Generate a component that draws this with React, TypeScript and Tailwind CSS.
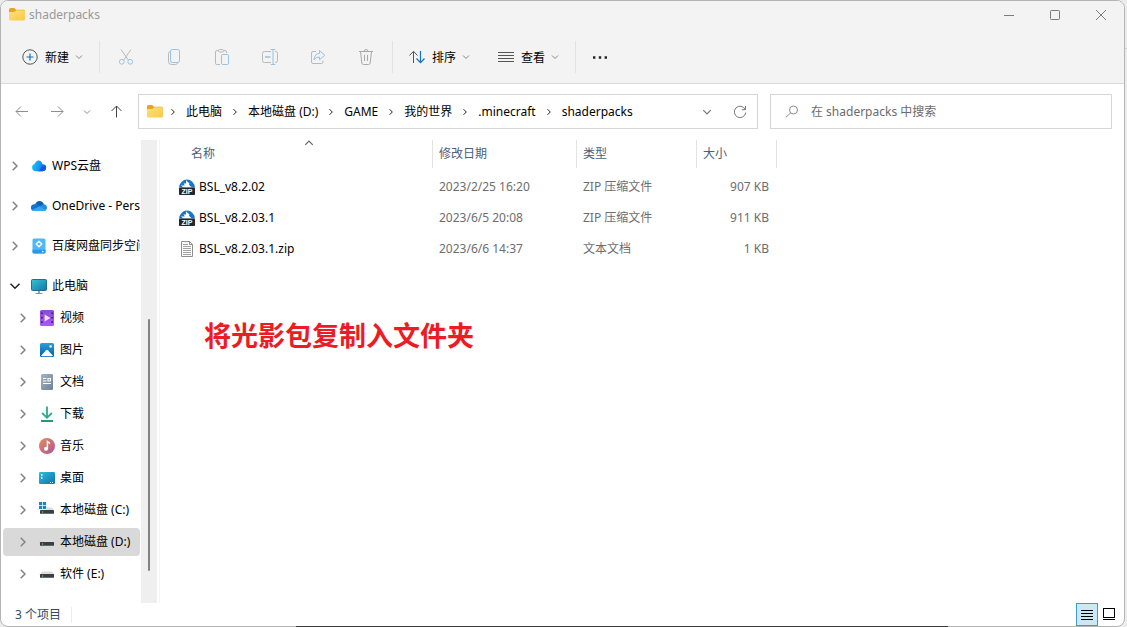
import type { ReactNode } from "react";

const CRUMBS = ["此电脑", "本地磁盘 (D:)", "GAME", "我的世界", ".minecraft", "shaderpacks"];

const CLOUD = [
  { label: "WPS云盘", icon: <WpsIcon /> },
  { label: "OneDrive - Personal", icon: <OneDriveIcon /> },
  { label: "百度网盘同步空间", icon: <BaiduIcon /> },
];

const PLACES = [
  { label: "视频", icon: <VideoIcon /> },
  { label: "图片", icon: <PictureIcon /> },
  { label: "文档", icon: <DocumentIcon /> },
  { label: "下载", icon: <DownloadIcon /> },
  { label: "音乐", icon: <MusicIcon /> },
  { label: "桌面", icon: <DesktopIcon /> },
  { label: "本地磁盘 (C:)", icon: <DriveIcon system /> },
  { label: "本地磁盘 (D:)", icon: <DriveIcon />, selected: true },
  { label: "软件 (E:)", icon: <DriveIcon /> },
];

const FILES = [
  { name: "BSL_v8.2.02", date: "2023/2/25 16:20", type: "ZIP 压缩文件", size: "907 KB", zip: true },
  { name: "BSL_v8.2.03.1", date: "2023/6/5 20:08", type: "ZIP 压缩文件", size: "911 KB", zip: true },
  { name: "BSL_v8.2.03.1.zip", date: "2023/6/6 14:37", type: "文本文档", size: "1 KB", zip: false },
];

function Svg({ children, className = "" }: { children: ReactNode; className?: string }) {
  return (
    <svg viewBox="0 0 16 16" fill="none" aria-hidden="true" className={`h-4 w-4 shrink-0 ${className}`}>
      {children}
    </svg>
  );
}

function Chevron({ dir, className = "" }: { dir: "right" | "down" | "up"; className?: string }) {
  const d = { right: "M2.5 1.2 5.3 4 2.5 6.8", down: "M1 2.5 4 5.5 7 2.5", up: "M1 5.5 4 2.5 7 5.5" }[dir];
  return (
    <svg viewBox="0 0 8 8" fill="none" stroke="currentColor" aria-hidden="true" className={`shrink-0 ${className}`}>
      <path d={d} />
    </svg>
  );
}

function FolderIcon() {
  return (
    <Svg>
      <defs>
        <linearGradient id="folder" x1="0" y1="0" x2="1" y2="1">
          <stop stopColor="#ffe083" />
          <stop offset="1" stopColor="#fbc843" />
        </linearGradient>
      </defs>
      <path d="M0 2.5Q0 1 1.5 1H5.2L7 2.7H14.5Q16 2.7 16 4.2V8H0Z" fill="#e5a520" />
      <path d="M0 5.7Q0 4.9 1 4.9H5.4L7.2 3.3H14.7Q16 3.3 16 4.5V12Q16 13.5 14.5 13.5H1.5Q0 13.5 0 12Z" fill="url(#folder)" />
    </Svg>
  );
}

function WpsIcon() {
  return (
    <Svg>
      <defs>
        <linearGradient id="wps" x1="0" y1="0.4" x2="1" y2="0.6">
          <stop stopColor="#16c7f3" />
          <stop offset="0.5" stopColor="#1497f5" />
          <stop offset="1" stopColor="#1d54e8" />
        </linearGradient>
      </defs>
      <path d="M4.5 13.2A3.7 3.7 0 0 1 3.6 6C4.5 3.7 6 2.4 7.6 2.4C10 2.4 10.9 4.4 11.4 6C14 6.3 15.2 7.8 15.2 9.6C15.2 11.8 13.6 13.2 11.6 13.2Z" fill="url(#wps)" />
      <path d="M6.5 13.2C9.6 12.8 9.5 7 14.3 7.2C16 10 14.8 13.2 11.6 13.2Z" fill="#1257e6" />
    </Svg>
  );
}

function OneDriveIcon() {
  return (
    <Svg>
      <path d="M4 7C4.6 4.4 6.4 3 8.5 3C10.6 3 12.3 4.3 12.9 6.3L10 10Z" fill="#0f5fb5" />
      <path d="M3.4 13A3.4 3.4 0 0 1 3.3 6.2C4.9 5.8 6.2 6.1 7.4 6.9L11 9.1L8 13Z" fill="#1473cd" />
      <path d="M7.5 9L10.6 7.2C13.5 5 16 7.4 16 9.8C16 11.7 14.6 13 12.8 13H6Z" fill="#1f8fe0" />
      <path d="M1.2 11.8L8.6 8.4L15.2 12Q14.3 13 12.8 13H3.4Q2 13 1.2 11.8Z" fill="#30a8ee" />
    </Svg>
  );
}

function BaiduIcon() {
  return (
    <Svg>
      <rect x="1.5" y="0.5" width="13" height="15" rx="1.6" fill="#4bb8f7" />
      <path d="M1.5 11.8H14.5V14Q14.5 15.5 13 15.5H3Q1.5 15.5 1.5 14Z" fill="#2b98e6" />
      <path d="M8 3.2 10.8 6 8 8.8 5.2 6Z" stroke="#fff" strokeWidth="1.5" strokeLinejoin="round" />
      <circle cx="11.8" cy="13.6" r="0.8" fill="#fff" />
    </Svg>
  );
}

function MonitorIcon() {
  return (
    <Svg>
      <defs>
        <linearGradient id="screen" x1="0" y1="0" x2="1" y2="1">
          <stop stopColor="#35c5cf" />
          <stop offset="1" stopColor="#1173b5" />
        </linearGradient>
      </defs>
      <rect x="0.5" y="1.5" width="15" height="11" rx="1" fill="url(#screen)" stroke="#1f6f91" />
      <path d="M7 13H9V15H7Z" fill="#8fa9b6" />
      <path d="M4.5 15.5H11.5" stroke="#7f98a5" />
    </Svg>
  );
}

function VideoIcon() {
  return (
    <Svg>
      <defs>
        <linearGradient id="video" x1="0" y1="0" x2="0" y2="1">
          <stop stopColor="#8a4bd6" />
          <stop offset="1" stopColor="#a65bf0" />
        </linearGradient>
      </defs>
      <rect x="1" y="0" width="14" height="16" rx="1.5" fill="url(#video)" />
      <path d="M2.9 2.5V15M13.1 2.5V15" stroke="#3f1a78" strokeWidth="1.6" strokeDasharray="1.6 2.8" />
      <path d="M5.6 4.4 11.4 8 5.6 11.6Z" fill="#f1e4ff" />
    </Svg>
  );
}

function PictureIcon() {
  return (
    <Svg>
      <defs>
        <linearGradient id="picture" x1="0" y1="0" x2="0" y2="1">
          <stop stopColor="#279fe0" />
          <stop offset="1" stopColor="#0b5ca6" />
        </linearGradient>
      </defs>
      <rect x="1" y="1" width="14" height="14" rx="1.5" fill="url(#picture)" />
      <path d="M2 13.8 7.2 8.2Q8 7.4 8.8 8.2L14 13.8Q13.6 14.2 12.6 14.2H3.4Q2.4 14.2 2 13.8Z" fill="#fff" />
      <circle cx="11.6" cy="4.4" r="1.2" fill="#fff" />
    </Svg>
  );
}

function DocumentIcon() {
  return (
    <Svg>
      <defs>
        <linearGradient id="document" x1="0" y1="0" x2="1" y2="1">
          <stop stopColor="#a5b5c4" />
          <stop offset="1" stopColor="#6d8196" />
        </linearGradient>
      </defs>
      <rect x="2" y="0" width="12" height="16" rx="1.2" fill="url(#document)" />
      <path d="M4 4.5H7.5M4 7H7.5M4 9.5H12M9 4.5H11.5V7H9Z" stroke="#fff" strokeWidth="1.1" />
    </Svg>
  );
}

function DownloadIcon() {
  return (
    <Svg>
      <path d="M8 0.5V11.5M3.2 7 8 11.8 12.8 7" stroke="#2ba98c" strokeWidth="1.8" />
      <path d="M2 15H14" stroke="#1e9b7c" strokeWidth="1.8" />
    </Svg>
  );
}

function MusicIcon() {
  return (
    <Svg>
      <defs>
        <linearGradient id="music" x1="0" y1="0" x2="1" y2="1">
          <stop stopColor="#e98a5c" />
          <stop offset="1" stopColor="#a9579a" />
        </linearGradient>
      </defs>
      <circle cx="8" cy="8" r="8" fill="url(#music)" />
      <circle cx="7" cy="10.8" r="2" fill="#fff" />
      <path d="M8.4 10.8V3.4L11 5.6" stroke="#fff" strokeWidth="1.4" />
    </Svg>
  );
}

function DesktopIcon() {
  return (
    <Svg>
      <defs>
        <linearGradient id="desktop" x1="0" y1="0" x2="1" y2="1">
          <stop stopColor="#2fc0d8" />
          <stop offset="1" stopColor="#0f6fb3" />
        </linearGradient>
      </defs>
      <rect x="0" y="2" width="16" height="12" rx="1.2" fill="url(#desktop)" />
      <path d="M2 5H3.5M2 8H3.5" stroke="#fff" strokeWidth="1.3" />
      <path d="M11 12.5H15" stroke="#d5f1fa" strokeDasharray="1 1" />
    </Svg>
  );
}

function DriveIcon({ system = false }: { system?: boolean }) {
  return (
    <Svg>
      <path d="M3.2 5.5H12.8L15 8.2H1Z" fill="#dcdcdc" />
      <rect x="1" y="8" width="14" height="3.8" rx="0.4" fill="#3a3f43" />
      <path d="M3 10H4.2" stroke="#7fe0a0" />
      {system && (
        <>
          <rect x="0" y="0" width="7.6" height="7.6" fill="#fff" />
          <path d="M0 0H3.2V3.2H0ZM3.9 0H7.1V3.2H3.9ZM0 3.9H3.2V7.1H0ZM3.9 3.9H7.1V7.1H3.9Z" fill="#1887bd" />
        </>
      )}
    </Svg>
  );
}

function ZipIcon() {
  return (
    <Svg>
      <path d="M0.2 8.4A7.8 7.8 0 0 1 15.8 8.4Z" fill="#1878c4" />
      <path d="M7 1.2 10.6 4.8 9.8 5.8 13 8.4H4.4L2 6.4H5.8L4.6 4.6H7Z" fill="#fff" />
      <rect x="0" y="8.6" width="16" height="7.4" rx="0.8" fill="#23272b" />
      <text x="8" y="14.7" textAnchor="middle" fill="#fff" fontFamily="Liberation Sans, sans-serif" fontSize="7" fontWeight="700">
        ZIP
      </text>
    </Svg>
  );
}

function TextFileIcon() {
  return (
    <Svg>
      <path d="M2.5 0.5H10.5L13.5 3.5V15.5H2.5Z" fill="#fafafa" stroke="#8e8e8e" />
      <path d="M10.5 0.5V3.5H13.5" stroke="#8e8e8e" />
      <path d="M4 3.5H9M4 5.5H12M4 7.5H12M4 9.5H12M4 11.5H12M4 13.5H12" stroke="#a2a2a2" />
    </Svg>
  );
}

const GRAY = "#b9b9b9";
const BLUE = "#94c3e6";

const EDIT_ACTIONS = [
  {
    label: "剪切",
    icon: (
      <Svg>
        <path d="M3 0.5 10.3 11M13 0.5 5.7 11" stroke={GRAY} />
        <circle cx="3.8" cy="12.8" r="2.4" stroke={BLUE} />
        <circle cx="12.2" cy="12.8" r="2.4" stroke={BLUE} />
      </Svg>
    ),
  },
  {
    label: "复制",
    icon: (
      <Svg>
        <path d="M4 2.5Q2.5 3 2.5 4.5V12.5Q2.5 15.5 5.5 15.5H9.5Q11 15.5 11.6 14" stroke={GRAY} />
        <rect x="4.5" y="0.5" width="9" height="13" rx="1.8" stroke={BLUE} />
      </Svg>
    ),
  },
  {
    label: "粘贴",
    icon: (
      <Svg>
        <path d="M6 15.5H2.8Q1.5 15.5 1.5 14.2V3Q1.5 1.5 3 1.5H4.5M9.5 1.5H11Q12.5 1.5 12.5 3V4" stroke={GRAY} />
        <rect x="4.5" y="0.5" width="5" height="2.5" rx="1.2" stroke={GRAY} />
        <rect x="7.5" y="5.5" width="7" height="10" rx="1.2" stroke={BLUE} />
      </Svg>
    ),
  },
  {
    label: "重命名",
    icon: (
      <Svg>
        <path d="M9 2.5H2.5Q0.5 2.5 0.5 4.5V11.5Q0.5 13.5 2.5 13.5H9M13 2.5H13.8Q15.5 2.5 15.5 4.5V11.5Q15.5 13.5 13.8 13.5H13" stroke={GRAY} />
        <path d="M3 8H8.5" stroke={BLUE} strokeWidth="1.4" />
        <path d="M8.7 0.5H13.3M8.7 15.5H13.3M11 0.5V15.5" stroke={BLUE} />
      </Svg>
    ),
  },
  {
    label: "共享",
    icon: (
      <Svg>
        <path d="M6 2.5H3Q1.5 2.5 1.5 4V13Q1.5 14.5 3 14.5H11.5Q13 14.5 13 13V11.5" stroke={GRAY} />
        <path d="M9.5 1.5 14.8 6.2 9.5 10.8V8Q6 7.8 4 10.8Q4.5 4.8 9.5 4.3Z" stroke={BLUE} strokeLinejoin="round" />
      </Svg>
    ),
  },
  {
    label: "删除",
    icon: (
      <Svg>
        <path d="M1 2.5H15M6 2.5Q6 0.5 8 0.5T10 2.5M2.5 2.5 3.8 14Q4 15.5 5.4 15.5H10.6Q12 15.5 12.2 14L13.5 2.5M6.5 5.8V12M9.5 5.8V12" stroke="#a9a9a9" />
      </Svg>
    ),
  },
];

function Divider() {
  return <div className="h-8 w-px shrink-0 bg-[#e2e2e2]" />;
}

function ToolButton({ label, icon }: { label: string; icon: ReactNode }) {
  return (
    <button type="button" className="flex shrink-0 items-center text-black">
      {icon}
      <span className="ml-[7px] pt-px">{label}</span>
      <Chevron dir="down" className="ml-1.5 h-2 w-2 text-[#888]" />
    </button>
  );
}

function TreeRow({ label, icon, child = false, open = false, selected = false }: {
  label: string;
  icon: ReactNode;
  child?: boolean;
  open?: boolean;
  selected?: boolean;
}) {
  return (
    <a
      href="#"
      className={`flex h-7 items-center overflow-hidden whitespace-nowrap rounded-sm ${child ? "pl-3.5" : "pl-1.5"} ${selected ? "bg-[#d9d9d9]" : ""}`}
    >
      <Chevron dir={open ? "down" : "right"} className={`mr-2.5 h-3 w-3 ${open ? "text-[#222]" : "text-[#858585]"}`} />
      {icon}
      <span className="ml-[5px]">{label}</span>
    </a>
  );
}

function TitleBar() {
  return (
    <header className="flex h-7 items-center pl-2">
      <FolderIcon />
      <h1 className="ml-1 text-[#999]">shaderpacks</h1>
      <div className="ml-auto flex gap-[30px] pr-[15px] text-[#7c7c7c]">
        <button type="button" aria-label="最小化">
          <Svg><path d="M3 8.5H13" stroke="currentColor" /></Svg>
        </button>
        <button type="button" aria-label="最大化">
          <Svg><rect x="3.5" y="3.5" width="9" height="9" rx="0.8" stroke="currentColor" /></Svg>
        </button>
        <button type="button" aria-label="关闭">
          <Svg><path d="M3 3 13 13M13 3 3 13" stroke="currentColor" /></Svg>
        </button>
      </div>
    </header>
  );
}

function Toolbar() {
  return (
    <div className="flex h-[55px] items-center border-b border-[#dadada] pl-[21px] pt-0.5">
      <ToolButton
        label="新建"
        icon={
          <Svg>
            <circle cx="8" cy="8" r="7.2" stroke="#555" />
            <path d="M4.5 8H11.5M8 4.5V11.5" stroke="#1572b8" strokeWidth="1.2" />
          </Svg>
        }
      />
      <div className="ml-4 mr-0.5"><Divider /></div>
      {EDIT_ACTIONS.map((a) => (
        <button key={a.label} type="button" aria-label={a.label} className="flex h-10 w-12 shrink-0 items-center justify-center">
          {a.icon}
        </button>
      ))}
      <div className="ml-0.5 mr-4"><Divider /></div>
      <ToolButton
        label="排序"
        icon={
          <Svg>
            <path d="M4.5 14V2.5M0.5 6.5 4.5 2.3 8.5 6.5" stroke="#555" />
            <path d="M11.5 2V13.5M7.5 9.5 11.5 13.7 15.5 9.5" stroke="#1572b8" strokeWidth="1.2" />
          </Svg>
        }
      />
      <div className="w-7" />
      <ToolButton
        label="查看"
        icon={<Svg><path d="M0 3.5H16M0 6.5H16M0 9.5H16M0 12.5H16" stroke="#555" /></Svg>}
      />
      <div className="mx-4"><Divider /></div>
      <button type="button" aria-label="查看更多">
        <Svg>
          <path d="M1 8.5H3.4M6.8 8.5H9.2M12.6 8.5H15" stroke="#222" strokeWidth="2.4" />
        </Svg>
      </button>
    </div>
  );
}

function AddressRow() {
  return (
    <div className="flex items-center pb-[11px] pl-[13px] pr-3 pt-2.5">
      <button type="button" aria-label="后退" className="text-[#8d8d8d]">
        <Svg><path d="M14 7.5H2M7 2.5 2 7.5 7 12.5" stroke="currentColor" /></Svg>
      </button>
      <button type="button" aria-label="前进" className="ml-[19px] text-[#8d8d8d]">
        <Svg><path d="M2 7.5H14M9 2.5 14 7.5 9 12.5" stroke="currentColor" /></Svg>
      </button>
      <button type="button" aria-label="最近的位置" className="ml-[18px] text-[#8d8d8d]">
        <Chevron dir="down" className="h-2 w-2" />
      </button>
      <button type="button" aria-label="上移" className="ml-[17px] text-[#444]">
        <Svg><path d="M8.5 13.5V2M3.5 7 8.5 2 13.5 7" stroke="currentColor" /></Svg>
      </button>

      <nav className="ml-3.5 flex h-[35px] min-w-0 flex-[620_1_620px] items-center border border-[#d6d6d6] pl-2">
        <FolderIcon />
        {CRUMBS.map((c) => (
          <div key={c} className="flex items-center whitespace-nowrap pr-[3px]">
            <Chevron dir="right" className="ml-1.5 mr-[9px] h-2 w-2 text-[#222]" />
            <a href="#">{c}</a>
          </div>
        ))}
        <button type="button" aria-label="以前的位置" className="ml-auto text-[#777]">
          <Chevron dir="down" className="h-2.5 w-2.5" />
        </button>
        <button type="button" aria-label="刷新" className="ml-5 mr-[9px] text-[#777]">
          <Svg>
            <path d="M13.2 5.5A5.7 5.7 0 1 0 13.7 8.5M13.5 2V5.7H9.8" stroke="currentColor" />
          </Svg>
        </button>
      </nav>

      <label className="ml-3 flex h-[35px] min-w-0 flex-[342_1_342px] items-center border border-[#d6d6d6] pl-3.5 text-[#8a8a8a]">
        <Svg>
          <circle cx="8.5" cy="6" r="4" stroke="currentColor" />
          <path d="M5.7 8.8 0.7 13.5" stroke="currentColor" />
        </Svg>
        <input
          type="search"
          aria-label="搜索"
          placeholder="在 shaderpacks 中搜索"
          className="ml-2.5 min-w-0 flex-1 bg-transparent outline-none placeholder:text-[#6b6b6b]"
        />
      </label>
    </div>
  );
}

function Sidebar() {
  return (
    <aside className="flex w-[156px] shrink-0">
      <div className="flex min-w-0 flex-1 flex-col gap-3 overflow-hidden pl-0.5 pr-px pt-3">
        {CLOUD.map((c) => (
          <TreeRow key={c.label} label={c.label} icon={c.icon} />
        ))}
        <div className="flex flex-col gap-1">
          <TreeRow label="此电脑" icon={<MonitorIcon />} open />
          {PLACES.map((p) => (
            <TreeRow key={p.label} label={p.label} icon={p.icon} selected={p.selected} child />
          ))}
        </div>
      </div>
      <div className="flex w-4 flex-col items-center bg-[#efefef]">
        <div className="flex-[179]" />
        <div className="w-0.5 flex-[252] rounded-full bg-[#828282]" />
        <div className="flex-[32]" />
      </div>
    </aside>
  );
}

function HeadCell({ label, first = false }: { label: string; first?: boolean }) {
  return (
    <th className="h-[31px] p-0 text-left align-top font-normal text-[#4c607a]">
      <button type="button" className={`relative flex h-7 w-full items-center border-r border-[#e3e3e3] ${first ? "pl-[31px]" : "pl-1.5"}`}>
        {label}
        {first && <Chevron dir="up" className="absolute -top-0.5 left-36 h-2.5 w-2.5 text-[#666]" />}
      </button>
    </th>
  );
}

function FileTable() {
  return (
    <table className="table-fixed border-collapse whitespace-nowrap text-[#6d6d6d]">
      <colgroup>
        <col className="w-[273px]" />
        <col className="w-36" />
        <col className="w-30" />
        <col className="w-20" />
      </colgroup>
      <thead>
        <tr>
          <HeadCell label="名称" first />
          <HeadCell label="修改日期" />
          <HeadCell label="类型" />
          <HeadCell label="大小" />
        </tr>
      </thead>
      <tbody>
        {FILES.map((f) => (
          <tr key={f.name} className="h-[31px]">
            <td className="py-0 pl-[19px] pr-0">
              <a href="#" className="flex items-center gap-1 text-black">
                {f.zip ? <ZipIcon /> : <TextFileIcon />}
                {f.name}
              </a>
            </td>
            <td className="py-0 pl-1.5 pr-0">{f.date}</td>
            <td className="py-0 pl-1.5 pr-0">{f.type}</td>
            <td className="py-0 pl-0 pr-2 text-right">{f.size}</td>
          </tr>
        ))}
      </tbody>
    </table>
  );
}

function StatusBar() {
  return (
    <footer className="flex h-[23px] items-center pl-3.5 text-[#2f4a63]">
      <span>3 个项目</span>
      <div className="ml-2.5 h-4 w-px bg-[#ececec]" />
      <div className="ml-auto flex h-full items-center gap-[3px] pr-[7px] text-black">
        <button type="button" aria-label="详细信息" className="flex h-full w-[22px] items-center justify-center border border-[#3f9ac4] bg-[#cce8f6]">
          <Svg><path d="M2 3.5H14M2 6.5H14M2 9.5H14M2 12.5H14" stroke="currentColor" /></Svg>
        </button>
        <button type="button" aria-label="大图标">
          <Svg>
            <rect x="2.5" y="1.5" width="11" height="9" stroke="currentColor" />
            <path d="M2 12.5H14" stroke="currentColor" />
          </Svg>
        </button>
      </div>
    </footer>
  );
}

export default function App() {
  return (
    <div className="relative flex min-h-screen flex-col bg-[#ececec] pr-0.5 font-['Noto_Sans','Noto_Sans_CJK_SC',sans-serif] text-[12px] leading-4 text-black">
      <div className="flex flex-1 flex-col overflow-hidden rounded-lg border border-[#b4b4b4] bg-white">
        <div className="bg-[#f3f3f3]">
          <TitleBar />
          <Toolbar />
        </div>
        <AddressRow />
        <div className="flex flex-1">
          <Sidebar />
          <main className="ml-0.5 min-w-0 flex-1 border-l border-[#f3f3f3]">
            <FileTable />
            <p className="mt-[54px] pl-11 text-[27px] font-bold leading-9 text-[#ed1c24]">将光影包复制入文件夹</p>
          </main>
        </div>
        <StatusBar />
      </div>
      {/* edge of the window behind */}
      <div className="absolute bottom-0 left-[26.3%] h-px w-[57.8%] bg-[#3a3a3a]" />
      <div className="absolute right-0 top-12 h-px w-0.5 bg-[#cfcfcf]" />
    </div>
  );
}
